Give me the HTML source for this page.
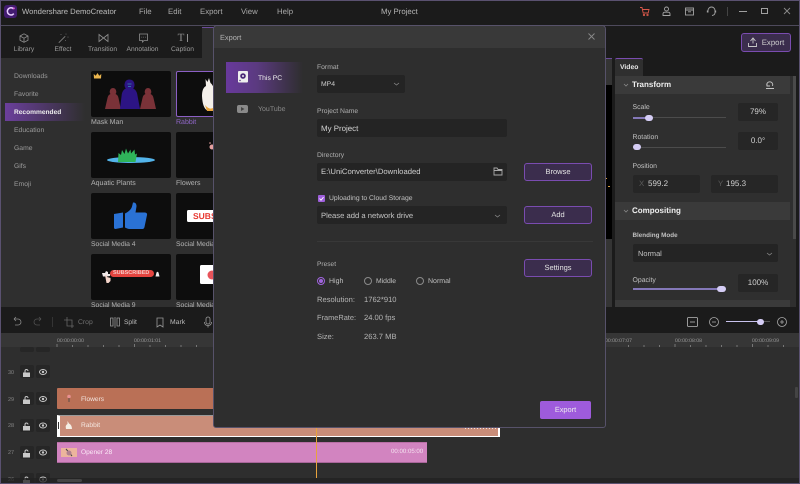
<!DOCTYPE html>
<html><head><meta charset="utf-8"><style>
*{box-sizing:border-box;margin:0;padding:0}
html,body{width:800px;height:484px;overflow:hidden;background:#2e2e2e}
body{position:relative;font-family:"Liberation Sans",sans-serif;font-size:7.800px;color:#c4c4c4;text-rendering:geometricPrecision}
.a{position:absolute}
.t{position:absolute;white-space:nowrap;line-height:12px;height:12px}
.c{transform:translateX(-50%)}
.thumb{position:absolute;width:80px;height:46px;background:#0d0d0d;border-radius:2px}
.in{position:absolute;background:#242424;border-radius:2px}
.btn{position:absolute;background:#3b2d4d;border:1px solid #7a4cb0;border-radius:3px;color:#e2e2e2;text-align:center;line-height:16px;font-size:7.500px}
.box{position:absolute;background:#262626;border-radius:2px;color:#cfcfcf;text-align:center;line-height:18px;font-size:8px}
.lk{position:absolute;width:14px;height:13px;background:#262626;border-radius:2px}
.s{font-size:6.800px;color:#9a9a9a;left:14px;margin-top:1px}
.l{font-size:7px;color:#b4b4b4;margin-top:1px}
.d{font-size:6.800px;color:#b0b0b0;left:317px;margin-top:1px}
.p{font-size:6.900px;color:#c0c0c0;left:632.500px;margin-top:1px}
.i{font-size:7.600px;color:#b4b4b4}
.r{font-size:5.100px;color:#9a9a9a;top:334px;margin-top:.5px}
.n{color:#858585;font-size:5.500px;margin-top:.5px}
.tab{color:#9a9a9a;font-size:6.700px;top:43px;margin-top:1px}
.m{color:#a9a9a9;top:6px}
.u{margin-top:1px}
svg{position:absolute;overflow:visible}
</style></head><body>

<!-- top bars -->
<div class="a" style="left:0;top:0;width:800px;height:58px;background:#1b1b1b"></div>
<div class="a" style="left:0;top:0;width:800px;height:1px;background:#5a5170"></div>
<div class="a" style="left:0;top:25px;width:800px;height:1px;background:#4e4a5c"></div>
<div class="a" style="left:605px;top:58px;width:195px;height:249px;background:#1b1b1b"></div>

<!-- logo -->
<div class="a" style="left:4px;top:5px;width:13px;height:13px;border-radius:3px;background:#421b70"></div>
<svg style="left:4px;top:5px" width="13" height="13" fill="none"><path d="M9.500 3.800A3.600 3.600 0 1 0 9.800 8.600" stroke="#e8d0ff" stroke-width="1.500"/><circle cx="9.800" cy="3.400" r="1" fill="#e05cd8"/></svg>
<div class="t" style="left:22px;top:6px;color:#bdbdbd;font-size:7.700px">Wondershare DemoCreator</div>
<div class="t m" style="left:139px">File</div>
<div class="t m" style="left:168px">Edit</div>
<div class="t m" style="left:200px">Export</div>
<div class="t m" style="left:241px">View</div>
<div class="t m" style="left:277px">Help</div>
<div class="t" style="left:381px;top:6px;color:#b5b5b5">My Project</div>

<!-- window icons -->
<svg style="left:639px;top:6px" width="11" height="11" fill="none" stroke="#d9584a" stroke-width=".9"><path d="M1 1.500h2l1.200 5.500h5l.8-3.500H3.400"/><circle cx="5" cy="9" r=".7"/><circle cx="8.500" cy="9" r=".7"/></svg>
<svg style="left:661px;top:6px" width="11" height="11" fill="none" stroke="#a5a5a5" stroke-width=".9"><circle cx="5.500" cy="3" r="2"/><path d="M2 9.500V8q0-1.800 1.800-1.800h3.400Q9 6.200 9 8v1.500z"/></svg>
<svg style="left:684px;top:6px" width="11" height="11" fill="none" stroke="#a5a5a5" stroke-width=".9"><rect x="1.500" y="2" width="8" height="7"/><path d="M1.500 4h8M4 5.800h3"/></svg>
<svg style="left:706px;top:5px" width="11" height="12" fill="none" stroke="#a5a5a5" stroke-width=".9"><path d="M2 7.500V5.500a3.500 3.500 0 0 1 7 0v2M9 7.500q0 2.500-3 3"/><path d="M1.500 5.500v2M9.500 5.500v2" stroke-width="1.300"/></svg>
<div class="a" style="left:727px;top:7px;width:1px;height:9px;background:#444"></div>
<div class="a" style="left:739px;top:11px;width:8px;height:1px;background:#a0a0a0"></div>
<div class="a" style="left:761px;top:8px;width:7px;height:6px;border:1px solid #a0a0a0"></div>
<svg style="left:783px;top:7px" width="8" height="8" stroke="#8a8a8a" stroke-width=".9"><path d="M1 1l6 6M7 1l-6 6"/></svg>

<!-- tabs -->
<svg style="left:19px;top:33px" width="10" height="10" fill="none" stroke="#8f8f8f" stroke-width=".8"><path d="M5 .8l4 2.200v4.200L5 9.300 1 7.200V3zM1 3l4 2.200L9 3M5 5.200v4"/></svg>
<svg style="left:58px;top:33px" width="11" height="10" fill="none" stroke="#8f8f8f" stroke-width=".8"><path d="M1 9.500L7 3.500M8 1v.1M10 4v.1M3 1.500v.1M7.500 7.500v.1" stroke-linecap="round"/></svg>
<svg style="left:98px;top:33px" width="11" height="10" fill="none" stroke="#8f8f8f" stroke-width=".8"><path d="M1 1.500L10 8.500V1.500L1 8.500z"/></svg>
<svg style="left:138px;top:33px" width="11" height="10" fill="none" stroke="#8f8f8f" stroke-width=".8"><path d="M1.500 1h8v6.500H6L4.500 9V7.500h-3zM3.500 4.200h.6M5.300 4.200h.6M7.100 4.200h.6"/></svg>
<div class="t c" style="left:181px;top:32px;font-family:'Liberation Serif',serif;font-size:11px;color:#8f8f8f">T</div>
<div class="a" style="left:187px;top:34px;width:1px;height:8px;background:#8f8f8f"></div>
<div class="t c tab" style="left:24px">Library</div>
<div class="t c tab" style="left:63px">Effect</div>
<div class="t c tab" style="left:102.500px">Transition</div>
<div class="t c tab" style="left:142.500px">Annotation</div>
<div class="t c tab" style="left:182.500px">Caption</div>

<!-- left panel -->
<div class="a" style="left:0;top:58px;width:212px;height:249px;background:#2f2f2f"></div>
<div class="a" style="left:202px;top:27px;width:12px;height:31px;background:#2f2f2f;border-top:1px solid #6a4a9a"></div>
<div class="a" style="left:5px;top:103px;width:80px;height:18px;background:linear-gradient(90deg,#6b3f9c,#2f2f2f)"></div>
<div class="t s" style="top:70px">Downloads</div>
<div class="t s" style="top:88px">Favorite</div>
<div class="t s" style="top:106px;color:#eee;font-size:6.600px;font-weight:bold">Recommended</div>
<div class="t s" style="top:124px">Education</div>
<div class="t s" style="top:142px">Game</div>
<div class="t s" style="top:160px">Gifs</div>
<div class="t s" style="top:178px">Emoji</div>

<!-- thumbnails -->
<div class="thumb" style="left:91px;top:71px"></div>
<div class="thumb" style="left:176px;top:71px;border:1px solid #8b5fc4;height:46px"></div>
<div class="thumb" style="left:91px;top:132px"></div>
<div class="thumb" style="left:176px;top:132px"></div>
<div class="thumb" style="left:91px;top:193px"></div>
<div class="thumb" style="left:176px;top:193px"></div>
<div class="thumb" style="left:91px;top:254px"></div>
<div class="thumb" style="left:176px;top:254px"></div>

<svg style="left:0;top:0" width="800" height="484">
<!-- crown -->
<path d="M94 78.500l-.3-4.500 2 1.700 1.800-2.700 1.800 2.700 2-1.700-.3 4.500z" fill="#eab54e"/>
<!-- mask men -->
<g fill="#7a3238"><path d="M105 109l2.500-11q.5-3 3-4-1-1-.8-2.500.5-3.500 3.300-3.500t3.300 3.500q.2 1.500-.8 2.500 2.500 1 3 4l2.300 11z"/><path d="M140 109l2.500-11q.5-3 3-4-1-1-.8-2.500.5-3.500 3.300-3.500t3.300 3.500q.2 1.500-.8 2.500 2.500 1 3 4l2.500 11z"/></g>
<path d="M120 109l1.800-15q.8-4 4-5.500-1.500-1.500-1.300-4 .5-5 5-5t5 5q.2 2.500-1.300 4 3.200 1.500 4 5.500l2.800 15z" fill="#2c1484"/>
<path d="M127.500 84h4M128 86.500h3" stroke="#2f8fb0" stroke-width=".8"/>
<!-- rabbit -->
<path d="M202 96q0-8 4-10l-.5-7 2 3 1.500-4 1.500 5q3 2 3 7v20h-7q-4-3-4.500-14z" fill="#f4f0ea"/>
<path d="M205 105q4 5 8 3v3h-6z" fill="#e9a63e"/>
<!-- flowers -->
<circle cx="212" cy="147" r="2.500" fill="#e6a0a0"/><circle cx="210" cy="143" r=".8" fill="#e6a0a0"/>
<!-- aquatic -->
<ellipse cx="131" cy="160" rx="24" ry="3" fill="#53b4ea"/>
<path d="M118 162l.5-9 2.500 2 1-5 2.500 4 1.500-5.500 2 5 2.500-4 .5 4 3.500-4 .5 5 2-1-1.500 8.500z" fill="#2fb45a"/>
<!-- thumb up -->
<path d="M114 214l9-1.500v15l-7.500 1.500q-1.500 0-1.500-1.500z" fill="#2a72d5"/>
<path d="M125 213.500q6-3 7-7t1-4q3.500-.5 3.500 4l-1 6h9.500q2.500.5 2 2.500l-2.500 12q-.5 2-2 2h-13q-2 0-4.500-1.500z" fill="#2a72d5"/>
<!-- subscribe -->
<rect x="187" y="210" width="30" height="12" rx="1.500" fill="#fff"/>
<rect x="110" y="270" width="44" height="7" rx="3.500" fill="#e4443f"/>
<path d="M102 273h3l1-2 2 1v2h2v2l-3 .5-4 0z" fill="#f0e8e8"/>
<path d="M105 275l1.500 0 .5 2 3.500 1v3l-2 2h-2z" fill="#f5d5cb"/>
<path d="M155.500 276.500l1-4q1-1.500 2 0l1 4z" fill="#eee"/>
<!-- heart -->
<rect x="200" y="265" width="16" height="19" rx="1.500" fill="#fff"/>
<circle cx="212" cy="275" r="4.500" fill="#e8545a"/>
</svg>
<div class="t" style="left:193px;top:212px;color:#e83a33;font-weight:bold;font-size:8.500px;line-height:8px;height:8px">SUBS</div>
<div class="t" style="left:113px;top:270px;color:#f7c9c6;font-weight:bold;font-size:5.500px;line-height:7px;height:7px">SUBSCRIBED</div>

<div class="t l" style="left:91px;top:116px">Mask Man</div>
<div class="t l" style="left:176px;top:116px;color:#9167c9">Rabbit</div>
<div class="t l" style="left:91px;top:177px">Aquatic Plants</div>
<div class="t l" style="left:176px;top:177px">Flowers</div>
<div class="t l" style="left:91px;top:238px;font-size:6.800px">Social Media 4</div>
<div class="t l" style="left:176px;top:238px;font-size:6.800px">Social Media 5</div>
<div class="t l" style="left:91px;top:299px;font-size:6.800px">Social Media 9</div>
<div class="t l" style="left:176px;top:299px;font-size:6.800px">Social Media 10</div>

<!-- preview strip -->
<div class="a" style="left:605px;top:58px;width:7px;height:249px;background:#343434;border-top:1px solid #6a4a9a"></div>
<div class="a" style="left:605px;top:85px;width:7px;height:154px;background:#000"></div>
<div class="a" style="left:605px;top:178px;width:2px;height:1px;background:#d99a3b"></div>
<div class="a" style="left:608px;top:186px;width:2px;height:1px;background:#d99a3b"></div>

<!-- right panel -->
<div class="btn" style="left:741px;top:33px;width:50px;height:19px;line-height:17px;padding-left:14px;color:#ccc;font-size:7.800px">Export</div>
<svg style="left:747px;top:37px" width="12" height="11" fill="none" stroke-width=".9"><path d="M1 6v3.500h8V6M3 4l2.500-3L8 4M5.500 1.500v5" stroke="#c8c8c8" transform="translate(.5 0)"/></svg>
<div class="a" style="left:615px;top:58px;width:28px;height:18px;background:#2f2f2f;border-top:1px solid #7a4cb0;border-radius:2px 2px 0 0"></div>
<div class="t u" style="left:620px;top:61px;color:#e6e6e6;font-weight:bold;font-size:6.800px">Video</div>
<div class="a" style="left:615px;top:76px;width:181px;height:231px;background:#2f2f2f"></div>
<div class="a" style="left:615px;top:76px;width:175px;height:18px;background:#3a3a3a"></div>
<div class="a" style="left:615px;top:202px;width:175px;height:18px;background:#3a3a3a"></div>
<div class="a" style="left:615px;top:300px;width:175px;height:7px;background:#3a3a3a"></div>
<div class="a" style="left:793px;top:76px;width:3px;height:163px;background:#4a4a4a"></div>
<svg style="left:623px;top:83px" width="6" height="4" fill="none" stroke="#888" stroke-width=".8"><path d="M1 1l2 2 2-2"/></svg>
<svg style="left:623px;top:209px" width="6" height="4" fill="none" stroke="#888" stroke-width=".8"><path d="M1 1l2 2 2-2"/></svg>
<div class="t" style="left:632px;top:79px;color:#eee;font-weight:bold;font-size:8px">Transform</div>
<svg style="left:765px;top:80px" width="10" height="10" fill="none" stroke="#c4c4c4" stroke-width=".9"><path d="M1 8.500h8M2 6a3 3 0 1 1 5.500 0M2 3v3h3"/></svg>
<div class="t p" style="top:101px">Scale</div>
<div class="a" style="left:633px;top:117px;width:93px;height:1px;background:#4c4c4c"></div>
<div class="a" style="left:633px;top:117px;width:16px;height:2px;background:#8478b8"></div>
<div class="a" style="left:645px;top:115px;width:8px;height:6px;border-radius:3px;background:#d5cdf5"></div>
<div class="box" style="left:738px;top:103px;width:40px;height:18px">79%</div>
<div class="t p" style="top:131px">Rotation</div>
<div class="a" style="left:633px;top:147px;width:93px;height:1px;background:#4c4c4c"></div>
<div class="a" style="left:633px;top:144px;width:8px;height:6px;border-radius:3px;background:#d5cdf5"></div>
<div class="box" style="left:738px;top:132px;width:40px;height:18px">0.0°</div>
<div class="t p" style="top:160px">Position</div>
<div class="box" style="left:633px;top:175px;width:67px;height:18px;text-align:left;padding-left:15px">599.2</div>
<div class="box" style="left:711px;top:175px;width:67px;height:18px;text-align:left;padding-left:15px">195.3</div>
<div class="t" style="left:639px;top:178px;color:#5c5c5c">X</div>
<div class="t" style="left:718px;top:178px;color:#5c5c5c">Y</div>
<div class="t" style="left:632px;top:205px;color:#eee;font-weight:bold;font-size:8px">Compositing</div>
<div class="t p" style="top:229px;font-size:6.300px;font-weight:bold">Blending Mode</div>
<div class="in" style="left:633px;top:244px;width:145px;height:18px"></div>
<div class="t" style="left:638px;top:248px;color:#c4c4c4;font-size:7.400px">Normal</div>
<svg style="left:766px;top:252px" width="7" height="4" fill="none" stroke="#888" stroke-width=".8"><path d="M1 1l2.500 2L6 1"/></svg>
<div class="t p" style="top:274px">Opacity</div>
<div class="a" style="left:633px;top:288px;width:90px;height:2px;background:#8478b8"></div>
<div class="a" style="left:717px;top:286px;width:9px;height:6px;border-radius:3px;background:#d5cdf5"></div>
<div class="box" style="left:738px;top:274px;width:40px;height:18px">100%</div>

<!-- timeline toolbar -->
<div class="a" style="left:0;top:307px;width:800px;height:26px;background:#1b1b1b"></div>
<svg style="left:0;top:307px" width="800" height="26" fill="none" stroke="#8a8a8a" stroke-width=".8">
<path d="M14 12h4a3 3 0 0 1 0 6h-3M14 12l2-2M14 12l2 2" stroke="#8a8a8a"/>
<path d="M41 12h-4a3 3 0 0 0 0 6h3M41 12l-2-2M41 12l-2 2" stroke="#505050"/>
<path d="M52.500 10v10" stroke="#3c3c3c"/>
<path d="M67 10v9h7M64 13h8v8" stroke="#666"/>
<path d="M110.500 11v8h2.500v-8zM115 10v11M117 11v8h2.500v-8z" stroke="#9a9a9a"/>
<path d="M157 11h6v9l-3-2-3 2z" stroke="#9a9a9a"/>
<path d="M208 10a2 2 0 0 1 2 2v3a2 2 0 0 1-4 0v-3a2 2 0 0 1 2-2zM204.500 15q0 3.500 3.500 3.500t3.500-3.500M208 18.500v2" stroke="#9a9a9a"/>
<rect x="687.500" y="10.500" width="10" height="9" rx="1" stroke="#bbb"/>
<path d="M690 15h5" stroke="#bbb"/>
<circle cx="714" cy="15" r="4.500" stroke="#aaa"/><path d="M712 15h4" stroke="#aaa"/>
<circle cx="782" cy="15" r="4.500" stroke="#aaa"/><path d="M780 15h4M782 13v4" stroke="#aaa"/>
</svg>
<div class="t u" style="left:78px;top:316px;color:#707070;font-size:6.800px">Crop</div>
<div class="t u" style="left:124px;top:316px;color:#bcbcbc;font-size:6.600px">Split</div>
<div class="t u" style="left:170px;top:316px;color:#bcbcbc;font-size:6.800px">Mark</div>
<div class="a" style="left:726px;top:321px;width:34px;height:1px;background:#c9c3ee"></div>
<div class="a" style="left:760px;top:321px;width:10px;height:1px;background:#555"></div>
<div class="a" style="left:757px;top:319px;width:7px;height:6px;border-radius:3px;background:#d5cdf5"></div>

<!-- ruler -->
<div class="a" style="left:0;top:333px;width:800px;height:14px;background:#363636"></div>
<div class="t r" style="left:57px">00:00:00:00</div>
<div class="t r" style="left:134px">00:00:01:01</div>
<div class="t r" style="left:605px">00:00:07:07</div>
<div class="t r" style="left:675px">00:00:08:08</div>
<div class="t r" style="left:752px">00:00:09:09</div>
<svg style="left:0;top:0" width="800" height="484"><path d="M57 344v3M72.500 345v2M88 345v2M103.500 345v2M119 345v2M134.500 344v3M150 345v2M165.500 345v2M181 345v2M196.500 345v2M628.500 345v2M644 345v2M659.500 345v2M675 344v3M690.500 345v2M706 345v2M721.500 345v2M737 345v2M752.500 344v3M768 345v2M783.500 345v2" stroke="#777" stroke-width="1"/></svg>

<!-- track headers -->
<div class="lk" style="left:20px;top:347px;height:5px"></div><div class="lk" style="left:36px;top:347px;height:5px"></div>
<div class="t c n" style="left:11px;top:366px">30</div>
<div class="lk" style="left:20px;top:365px"></div><div class="lk" style="left:36px;top:365px"></div>
<div class="t c n" style="left:11px;top:393px">29</div>
<div class="lk" style="left:20px;top:392px"></div><div class="lk" style="left:36px;top:392px"></div>
<div class="t c n" style="left:11px;top:419px">28</div>
<div class="lk" style="left:20px;top:419px"></div><div class="lk" style="left:36px;top:419px"></div>
<div class="t c n" style="left:11px;top:446px">27</div>
<div class="lk" style="left:20px;top:446px"></div><div class="lk" style="left:36px;top:446px"></div>
<div class="t c n" style="left:11px;top:473px">26</div>
<div class="lk" style="left:20px;top:473px"></div><div class="lk" style="left:36px;top:473px"></div>
<svg style="left:0;top:0" width="800" height="484">
<g fill="#c8c8c8"><rect x="23" y="372.500" width="7" height="4.500"/><rect x="23" y="399.500" width="7" height="4.500"/><rect x="23" y="426" width="7" height="4.500"/><rect x="23" y="453" width="7" height="4.500"/><rect x="23" y="480" width="7" height="4"/></g>
<g fill="none" stroke="#c8c8c8" stroke-width="1"><path d="M25 372.500v-1.500a1.500 1.500 0 0 1 3 0M25 399.500v-1.500a1.500 1.500 0 0 1 3 0M25 426v-1.500a1.500 1.500 0 0 1 3 0M25 453v-1.500a1.500 1.500 0 0 1 3 0M25 480v-1.500a1.500 1.500 0 0 1 3 0"/>
<ellipse cx="43" cy="372" rx="3.500" ry="2.500"/><ellipse cx="43" cy="399" rx="3.500" ry="2.500"/><ellipse cx="43" cy="425.500" rx="3.500" ry="2.500"/><ellipse cx="43" cy="452.500" rx="3.500" ry="2.500"/><ellipse cx="43" cy="479.500" rx="3.500" ry="2.500"/></g>
<g fill="#c8c8c8"><circle cx="43" cy="372" r="1.200"/><circle cx="43" cy="399" r="1.200"/><circle cx="43" cy="425.500" r="1.200"/><circle cx="43" cy="452.500" r="1.200"/><circle cx="43" cy="479.500" r="1.200"/></g>
</svg>

<!-- clips -->
<div class="a" style="left:57px;top:388px;width:160px;height:21px;background:#ba7056;border-radius:1px"></div>
<svg style="left:66px;top:394px" width="6" height="9"><circle cx="3" cy="2.500" r="1.800" fill="#e89090"/><path d="M3 4v4" stroke="#444" stroke-width=".8"/></svg>
<div class="t u" style="left:81px;top:393px;color:#f2e4de;font-size:6.600px">Flowers</div>

<div class="a" style="left:57px;top:415px;width:443px;height:22px;background:#c98d79;border-top:1px solid #999;border-bottom:1px solid #fff;border-left:3px solid #fff;border-right:2px solid #fff"></div>
<div class="a" style="left:58px;top:422px;width:1px;height:7px;background:#333"></div>
<svg style="left:64px;top:421px" width="9" height="9"><path d="M2 8q-1-4 1.500-5l0-3 1.500 2.500q3 1.500 3 5.500z" fill="#f5efe6"/></svg>
<div class="t u" style="left:81px;top:419px;color:#f5e8e2;font-size:6.600px">Rabbit</div>
<div class="a" style="left:465px;top:428px;width:32px;height:1px;background:repeating-linear-gradient(90deg,#f0e4df 0 1px,#c98d79 1px 3px)"></div>

<div class="a" style="left:57px;top:442px;width:370px;height:21px;background:#d284c0;border-top:1px solid #b96fa6;border-bottom:1px solid #a9669a"></div>
<div class="a" style="left:61px;top:448px;width:16px;height:9px;background:#ecb59d"></div>
<svg style="left:64px;top:448px" width="10" height="9"><path d="M2 1l6 7" stroke="#444" stroke-width="1"/><circle cx="5" cy="5" r="2.500" fill="#b08090"/></svg>
<div class="t u" style="left:81px;top:446px;color:#fbeaf6;font-size:6.600px">Opener 28</div>
<div class="t" style="left:391px;top:446px;color:#f6e3f1;font-size:6.100px">00:00:05:00</div>
<div class="a" style="left:316px;top:427px;width:1px;height:51px;background:#e8a33d"></div>

<!-- bottom scroll -->
<div class="a" style="left:0;top:478px;width:800px;height:5px;background:rgba(34,34,34,.75)"></div>
<div class="a" style="left:57px;top:479px;width:25px;height:3px;border-radius:2px;background:#444"></div>
<div class="a" style="left:795px;top:387px;width:3px;height:11px;border-radius:1px;background:#444"></div>
<div class="a" style="left:0;top:483px;width:800px;height:1px;background:#5a5170"></div>
<div class="a" style="left:0;top:0;width:1px;height:484px;background:#5a5170"></div>
<div class="a" style="left:799px;top:0;width:1px;height:484px;background:#5a5170"></div>

<!-- dialog -->
<div class="a" style="left:213px;top:25px;width:393px;height:403px;background:#2e2e2e;border:1px solid #57526a;border-radius:4px 4px 3px 3px"></div>
<div class="a" style="left:214px;top:26px;width:391px;height:22px;background:#393939;border-radius:3px 3px 0 0"></div>
<div class="t" style="left:220px;top:32px;color:#b5b5b5;font-size:7.400px">Export</div>
<svg style="left:588px;top:33px" width="7" height="7" stroke="#8a8a8a" stroke-width=".9"><path d="M.5.500l6 6M6.500.500l-6 6"/></svg>

<div class="a" style="left:226px;top:62px;width:77px;height:31px;background:linear-gradient(90deg,#68399c,#5b3a80 40%,#2e2e2e)"></div>
<svg style="left:238px;top:71px" width="10" height="12"><rect width="10" height="11.500" rx="1" fill="#eee"/><circle cx="5" cy="5" r="2.800" fill="#4b2a78"/><circle cx="5" cy="5" r="1" fill="#eee"/><circle cx="2" cy="9.500" r=".7" fill="#4b2a78"/></svg>
<div class="t u" style="left:258px;top:72px;color:#eee;font-size:6.800px">This PC</div>
<svg style="left:237px;top:105px" width="11" height="8"><rect width="11" height="8" rx="2" fill="#8a8a8a"/><path d="M4 2l3.500 2L4 6z" fill="#444"/></svg>
<div class="t u" style="left:258px;top:103px;color:#888;font-size:7px">YouTube</div>

<div class="t d" style="top:61px">Format</div>
<div class="in" style="left:317px;top:75px;width:88px;height:18px"></div>
<div class="t u" style="left:321px;top:78px;color:#cfcfcf;font-size:6.800px">MP4</div>
<svg style="left:393px;top:82px" width="7" height="4" fill="none" stroke="#888" stroke-width=".8"><path d="M1 1l2.500 2L6 1"/></svg>

<div class="t d" style="top:105px">Project Name</div>
<div class="in" style="left:317px;top:119px;width:190px;height:18px"></div>
<div class="t" style="left:321px;top:123px;color:#d6d6d6;font-size:7.900px">My Project</div>

<div class="t d" style="top:149px">Directory</div>
<div class="in" style="left:317px;top:163px;width:190px;height:18px"></div>
<div class="t" style="left:321px;top:166px;color:#cfcfcf;font-size:7.700px">E:\UniConverter\Downloaded</div>
<svg style="left:493px;top:167px" width="10" height="9" fill="none" stroke="#aaa" stroke-width=".9"><path d="M1 1h3l1 1.500h4V8H1zM1 3.500h8"/></svg>

<div class="a" style="left:318px;top:195px;width:7px;height:7px;background:#9f5fdc;border-radius:1px"></div>
<svg style="left:318px;top:195px" width="7" height="7" fill="none" stroke="#fff" stroke-width=".9"><path d="M1.500 3.500l1.500 1.700 2.500-3"/></svg>
<div class="t u" style="left:329px;top:192px;color:#c0c0c0;font-size:6.800px">Uploading to Cloud Storage</div>
<div class="in" style="left:317px;top:206px;width:190px;height:18px"></div>
<div class="t" style="left:321px;top:210px;color:#c4c4c4;font-size:7.650px">Please add a network drive</div>
<svg style="left:494px;top:214px" width="7" height="4" fill="none" stroke="#888" stroke-width=".8"><path d="M1 1l2.500 2L6 1"/></svg>

<div class="btn" style="left:524px;top:163px;width:68px;height:18px">Browse</div>
<div class="btn" style="left:524px;top:206px;width:68px;height:18px">Add</div>
<div class="btn" style="left:524px;top:259px;width:68px;height:18px">Settings</div>

<div class="a" style="left:317px;top:241px;width:276px;height:1px;background:#383838"></div>

<div class="t d" style="top:258px;font-size:6.600px">Preset</div>
<div class="a" style="left:317px;top:277px;width:8px;height:8px;border:1px solid #a064de;border-radius:50%"></div>
<div class="a" style="left:319px;top:279px;width:4px;height:4px;background:#a064de;border-radius:50%"></div>
<div class="t u" style="left:329px;top:275px;color:#c0c0c0;font-size:7px">High</div>
<div class="a" style="left:364px;top:277px;width:8px;height:8px;border:1px solid #8a8a8a;border-radius:50%"></div>
<div class="t u" style="left:376px;top:275px;color:#c0c0c0;font-size:6.800px">Middle</div>
<div class="a" style="left:416px;top:277px;width:8px;height:8px;border:1px solid #8a8a8a;border-radius:50%"></div>
<div class="t u" style="left:428px;top:275px;color:#c0c0c0;font-size:7px">Normal</div>

<div class="t i" style="left:317px;top:294px">Resolution:</div>
<div class="t i" style="left:364px;top:294px">1762*910</div>
<div class="t i" style="left:317px;top:312px;font-size:7.400px">FrameRate:</div>
<div class="t i" style="left:364px;top:312px">24.00 fps</div>
<div class="t i" style="left:317px;top:331px">Size:</div>
<div class="t i" style="left:364px;top:331px">263.7 MB</div>

<div class="a" style="left:540px;top:401px;width:51px;height:18px;background:#9e5bdc;border-radius:2px;color:#eee;text-align:center;line-height:18px;font-size:7.400px">Export</div>

</body></html>
